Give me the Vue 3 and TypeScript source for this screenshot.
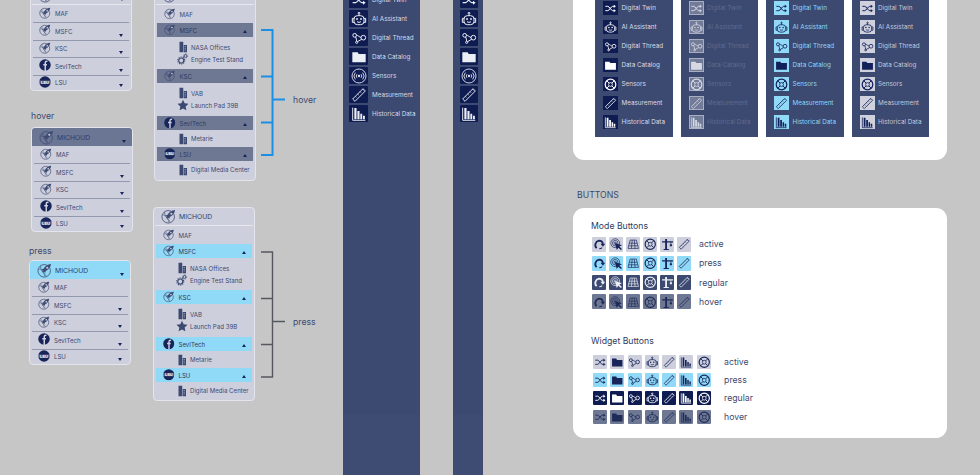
<template>
  <div class="board">
    <!-- shared icon set -->
    <svg class="sprite" aria-hidden="true">
      <defs>
        <symbol id="i-shuffle" viewBox="0 0 24 24">
          <path d="M2.500 8h4.500c3 0 6 8 9 8h3M2.500 16h4.500c3 0 6-8 9-8h3" fill="none" stroke="currentColor" stroke-width="1.800" />
          <path d="M18 5l4 3-4 3zM18 13l4 3-4 3z" fill="currentColor" />
        </symbol>
        <symbol id="i-robot" viewBox="0 0 24 24">
          <g fill="none" stroke="currentColor" stroke-width="1.500">
            <rect x="4.500" y="7" width="15" height="13.500" rx="5" />
            <path d="M12 7V4.800M4.500 11H2v6h2.500M19.500 11H22v6h-2.500M9 16c2 1.300 4 1.300 6 0" />
            <circle cx="12" cy="3.300" r="1.300" />
          </g>
          <circle cx="9" cy="12" r="1.400" fill="currentColor" />
          <circle cx="15" cy="12" r="1.400" fill="currentColor" />
        </symbol>
        <symbol id="i-thread" viewBox="0 0 24 24">
          <g fill="none" stroke="currentColor" stroke-width="1.500">
            <circle cx="5.500" cy="8" r="2.800" />
            <circle cx="18.500" cy="11.500" r="3.500" />
            <circle cx="8.500" cy="18.500" r="1.600" />
            <path d="M8.300 8c2.500 0 4.500 2.700 6.700 3.300M9.800 17.500l6-3.500M7 10.500c.8 2.200 1.500 4 1.500 6.400" />
          </g>
        </symbol>
        <symbol id="i-folder" viewBox="0 0 24 24">
          <path d="M2 5h8l1.500 2.500H22V20H2z" fill="currentColor" />
        </symbol>
        <symbol id="i-sensors" viewBox="0 0 24 24">
          <g fill="none" stroke="currentColor" stroke-width="1.300">
            <circle cx="12" cy="12" r="10.500" />
            <path d="M6.500 7a7.500 7.500 0 0 0 0 10M17.500 7a7.500 7.500 0 0 1 0 10M9 9.300a4 4 0 0 0 0 5.400M15 9.300a4 4 0 0 1 0 5.400" />
          </g>
          <circle cx="12" cy="12" r="1.700" fill="currentColor" />
        </symbol>
        <symbol id="i-life" viewBox="0 0 24 24">
          <g fill="none" stroke="currentColor">
            <circle cx="12" cy="12" r="9.800" stroke-width="2.200" />
            <circle cx="12" cy="12" r="3.600" stroke-width="1.400" />
            <path d="M5.500 5.500l4 4M18.500 5.500l-4 4M5.500 18.500l4-4M18.500 18.500l-4-4" stroke-width="1.800" />
          </g>
        </symbol>
        <symbol id="i-ruler" viewBox="0 0 24 24">
          <g fill="none" stroke="currentColor" stroke-width="1.400">
            <path d="M2.500 18L18 2.500l3.500 3.500L6 21.500z" />
            <path d="M6.500 14l1.700 1.700M10 10.500l1.700 1.700M13.500 7l1.700 1.700M17 3.500l1.700 1.700" stroke-width="1" />
          </g>
        </symbol>
        <symbol id="i-bars" viewBox="0 0 24 24">
          <path d="M2.500 2.500v19h19" fill="none" stroke="currentColor" stroke-width="1.400" />
          <path d="M5 3h3.300v17H5zM9.600 7.500h3.200V20H9.600zM14 11.500h2.800V20H14zM18 14.500h2.800V20H18z" fill="currentColor" />
        </symbol>
        <symbol id="i-rotate" viewBox="0 0 24 24">
          <path d="M7 19.500A8.500 8.500 0 0 1 11.500 5a7.500 7.500 0 0 1 7.500 6.500" fill="none" stroke="currentColor" stroke-width="3.400" />
          <path d="M14.500 11h9l-4.500 6z" fill="currentColor" />
          <path d="M12 20.500a8 8 0 0 0 5.500-2" fill="none" stroke="currentColor" stroke-width="2" />
        </symbol>
        <symbol id="i-target" viewBox="0 0 24 24">
          <g fill="none" stroke="currentColor" stroke-width="1.300">
            <circle cx="10" cy="10" r="8.500" />
            <circle cx="10" cy="10" r="5.300" />
            <circle cx="10" cy="10" r="2.200" />
          </g>
          <path d="M9.500 9.500L23 14l-5 2.500 5 4.500-2 2-5-4.500L13 23z" fill="currentColor" />
        </symbol>
        <symbol id="i-grid" viewBox="0 0 24 24">
          <g fill="none" stroke="currentColor" stroke-width="1.300">
            <path d="M6 4h12l4 16H2z" />
            <path d="M4.500 10h15M3.200 15h17.600M10 4l-1.500 16M14 4l1.500 16" />
          </g>
        </symbol>
        <symbol id="i-crane" viewBox="0 0 24 24">
          <path d="M8 2h3.500v19H15v2H5v-2h3zM2 6h21v2.500H2z" fill="currentColor" />
          <path d="M19 8v4" stroke="currentColor" stroke-width="1.400" />
          <path d="M17 12h4v4h-4z" fill="currentColor" />
        </symbol>
        <symbol id="i-site" viewBox="0 0 24 24">
          <g fill="none" stroke="#3f4c74">
            <circle cx="11.500" cy="12.500" r="10" stroke-width="1.300" />
            <path d="M2.500 10c5-2 9 5 10 11M6 4.500c-1 5 3 11 9 16" stroke-width="1" />
          </g>
          <path d="M22.500 1.500c-5.500.4-10 3.300-12 7.500l-3 1 2 1.800-1 3 2.800-1 1.800 2 1-3c4.600-2 7.800-6.600 8.400-11.300z" fill="#3f4c74" />
          <circle cx="16.500" cy="7.500" r="1.700" fill="#cdcfdc" />
        </symbol>
        <symbol id="i-fb" viewBox="0 0 24 24">
          <circle cx="12" cy="12" r="11.500" fill="currentColor" />
          <path d="M17 4.500h-1.500c-2 0-3 1.200-3 3.200V24M8.500 11.500H16" fill="none" stroke="#cdcfdc" stroke-width="3" />
        </symbol>
        <symbol id="i-lsu" viewBox="0 0 24 24">
          <circle cx="12" cy="12" r="11.500" fill="currentColor" />
          <path d="M0 9h24v6H0z" fill="#cdcfdc" opacity=".35" />
          <text x="12" y="15" text-anchor="middle" font-size="8" font-weight="700" font-family="Inter, sans-serif" fill="#fff">LSU</text>
        </symbol>
        <symbol id="i-building" viewBox="0 0 24 24">
          <path d="M5 1.500h7.500v21H5zM13.500 8H20v14.500h-6.500z" fill="currentColor" />
          <path d="M15 11h3M15 14.500h3M15 18h3" stroke="#cdcfdc" stroke-width="1" />
        </symbol>
        <symbol id="i-gears" viewBox="0 0 24 24">
          <g fill="none" stroke="currentColor">
            <circle cx="8.500" cy="15" r="5" stroke-width="2.400" />
            <circle cx="8.500" cy="15" r="7" stroke-width="2.200" stroke-dasharray="2.200 2.200" />
            <circle cx="17" cy="6" r="2.800" stroke-width="1.800" />
            <circle cx="17" cy="6" r="4.300" stroke-width="1.500" stroke-dasharray="1.700 1.700" />
          </g>
        </symbol>
        <symbol id="i-star" viewBox="0 0 24 24">
          <path d="M12 1.500l3.300 7.200 7.700.9-5.700 5.300 1.500 7.800L12 18.800l-6.800 3.900 1.500-7.800L1 9.600l7.700-.9z" fill="currentColor" />
        </symbol>
      </defs>
    </svg>

    <!-- tree menus -->
    <section v-for="menu in menus" :key="menu.id" class="menu" :class="[menu.id, menu.state, { open: menu.open }]">
      <header class="menu-head">
        <svg class="head-icon"><use href="#i-site" /></svg>
        <span>MICHOUD</span>
        <i v-if="!menu.open" class="caret" />
      </header>
      <template v-for="node in tree" :key="node.label">
        <div class="menu-row" :class="{ branch: node.kids.length }">
          <svg class="row-icon"><use :href="`#i-${node.icon}`" /></svg>
          <span>{{ node.label }}</span>
          <i v-if="node.kids.length" class="caret" :class="{ up: menu.open }" />
        </div>
        <div
          v-if="menu.open && node.kids.length"
          class="kids"
          :class="{ single: node.kids.length === 1, roomy: node.label === 'KSC' }"
        >
          <div v-for="kid in node.kids" :key="kid.label" class="kid">
            <svg class="kid-icon"><use :href="`#i-${kid.icon}`" /></svg>
            <span>{{ kid.label }}</span>
          </div>
        </div>
      </template>
    </section>

    <p class="note note-hover">hover</p>
    <p class="note note-press">press</p>

    <div v-for="b in brackets" :key="b.label" class="bracket" :class="b.label">
      <svg width="25" height="128" viewBox="0 0 25 128">
        <path d="M0 1h11.500v125H0M0 47.500h11.500M0 93.500h11.500M11.500 70.500H24" fill="none" stroke="currentColor" :stroke-width="b.weight" />
      </svg>
      <span class="note">{{ b.label }}</span>
    </div>

    <!-- full height nav rails -->
    <nav class="rail rail-wide">
      <div v-for="item in railItems" :key="item.label" class="rail-item">
        <span class="rail-tile"><svg><use :href="`#i-${item.icon}`" /></svg></span>
        <span>{{ item.label }}</span>
      </div>
    </nav>
    <nav class="rail rail-slim">
      <div v-for="item in railItems" :key="item.label" class="rail-item">
        <span class="rail-tile"><svg><use :href="`#i-${item.icon}`" /></svg></span>
      </div>
    </nav>

    <!-- nav states -->
    <div class="card card-nav">
      <div v-for="state in navStates" :key="state" class="nav-col" :class="state">
        <div v-for="item in navItems" :key="item.label" class="nav-item">
          <span class="nav-tile"><svg><use :href="`#i-${item.icon}`" /></svg></span>
          <span>{{ item.label }}</span>
        </div>
      </div>
    </div>

    <h2 class="buttons-title">BUTTONS</h2>

    <!-- button states -->
    <div class="card card-buttons">
      <section v-for="group in buttonGroups" :key="group.title" class="btn-group" :class="group.kind">
        <h3>{{ group.title }}</h3>
        <div v-for="state in buttonStates" :key="state" class="btn-row" :class="state">
          <span v-for="icon in group.icons" :key="icon" class="btn"><svg><use :href="`#i-${icon}`" /></svg></span>
          <span class="btn-label">{{ state }}</span>
        </div>
      </section>
    </div>
  </div>
</template>

<script setup lang="ts">
interface Kid {
  label: string
  icon: string
}

interface TreeNode {
  label: string
  icon: string
  kids: Kid[]
}

const tree: TreeNode[] = [
  { label: 'MAF', icon: 'site', kids: [] },
  {
    label: 'MSFC',
    icon: 'site',
    kids: [
      { label: 'NASA Offices', icon: 'building' },
      { label: 'Engine Test Stand', icon: 'gears' },
    ],
  },
  {
    label: 'KSC',
    icon: 'site',
    kids: [
      { label: 'VAB', icon: 'building' },
      { label: 'Launch Pad 39B', icon: 'star' },
    ],
  },
  { label: 'SevITech', icon: 'fb', kids: [{ label: 'Metarie', icon: 'building' }] },
  { label: 'LSU', icon: 'lsu', kids: [{ label: 'Digital Media Center', icon: 'building' }] },
]

const menus = [
  { id: 'm-base', state: 'regular', open: false },
  { id: 'm-hover', state: 'hover', open: false },
  { id: 'm-press', state: 'press', open: false },
  { id: 'm-open-hover', state: 'hover', open: true },
  { id: 'm-open-press', state: 'press', open: true },
]

const brackets = [
  { label: 'hover', weight: 2 },
  { label: 'press', weight: 1.4 },
]

const railItems = [
  { label: 'Digital Twin', icon: 'shuffle' },
  { label: 'AI Assistant', icon: 'robot' },
  { label: 'Digital Thread', icon: 'thread' },
  { label: 'Data Catalog', icon: 'folder' },
  { label: 'Sensors', icon: 'sensors' },
  { label: 'Measurement', icon: 'ruler' },
  { label: 'Historical Data', icon: 'bars' },
]

const navItems = railItems.map((item) => (item.icon === 'sensors' ? { ...item, icon: 'life' } : item))
const navStates = ['regular', 'disabled', 'press', 'active']

const buttonStates = ['active', 'press', 'regular', 'hover']
const buttonGroups = [
  { title: 'Mode Buttons', kind: 'mode', icons: ['rotate', 'target', 'grid', 'life', 'crane', 'ruler'] },
  { title: 'Widget Buttons', kind: 'widget', icons: ['shuffle', 'folder', 'thread', 'robot', 'ruler', 'bars', 'life'] },
]
</script>

<style>
html,
body {
  margin: 0;
  background: #c6c6c6;
}
</style>

<style scoped>
.board {
  position: relative;
  width: 980px;
  height: 475px;
  overflow: hidden;
  background: #c6c6c6;
  font-family: Inter, "Liberation Sans", sans-serif;
  color: #3c4a72;
}

.sprite {
  position: absolute;
  width: 0;
  height: 0;
}

svg {
  display: block;
}

/* tree menu */
.menu {
  position: absolute;
  box-sizing: border-box;
  width: 102px;
  border: 1px solid #e3e4ec;
  border-radius: 4px;
  background: #cdcfdc;
  font-size: 6.100px;
}

.m-base { left: 30px; top: -14px; }
.m-hover { left: 31px; top: 127px; }
.m-press { left: 29px; top: 260px; }
.m-open-hover { left: 154px; top: -14px; padding-bottom: 2px; }
.m-open-press { left: 153px; top: 207px; padding-bottom: 1px; }

.menu-head {
  display: flex;
  align-items: center;
  gap: 3px;
  box-sizing: border-box;
  height: 18px;
  padding: 0 6px 0 7px;
  border-radius: 3px 3px 0 0;
  font-size: 6.800px;
  color: #2f3c66;
}

.head-icon {
  width: 15px;
  height: 15px;
}

.m-hover .menu-head { background: #6b7594; }
.m-press .menu-head { background: #90d9f7; }

.m-base .menu-head,
.open .menu-head {
  border-bottom: 1px solid #e6e7ee;
  margin: 0 1px;
  padding-left: 6px;
}

.menu-row {
  display: flex;
  align-items: center;
  gap: 4px;
  box-sizing: border-box;
  height: 17.500px;
  margin: 0 2px;
  padding: 0 6px;
  border-top: 1px solid #9299ad;
}

.menu-row span {
  transform: translateY(-0.500px);
}

.row-icon {
  width: 12px;
  height: 12px;
  color: #17255a;
  transform: translateY(-1px);
}

.menu-head + .menu-row {
  border-top: 0;
  height: 17px;
}

.menu-row:last-child {
  height: 15.500px;
}

.caret {
  width: 0;
  height: 0;
  margin-left: auto;
  align-self: flex-end;
  margin-bottom: 3px;
  border-left: 2.500px solid transparent;
  border-right: 2.500px solid transparent;
  border-top: 3px solid #17255a;
}

.caret.up {
  margin-bottom: 4px;
  border-top: 0;
  border-bottom: 3px solid #17255a;
}

/* expanded */
.open .menu-row {
  height: 14px;
  border-top: 0;
  padding: 0 6px 0 7px;
}

.open .menu-head + .menu-row {
  height: 18px;
}

.open .row-icon {
  width: 11.500px;
  height: 11.500px;
  transform: none;
}

.m-open-hover .branch { background: #6e7893; color: #2f3b62; }
.m-open-press .branch { background: #90d9f7; color: #2f3b62; }

.kids {
  padding: 4px 0;
}

.kids.roomy {
  padding-bottom: 5px;
}

.kids.single {
  padding: 2px 0;
}

.kid {
  display: flex;
  align-items: center;
  gap: 2px;
  height: 12px;
  padding-left: 22px;
}

.kids.single .kid {
  height: 13px;
}

.kid-icon {
  width: 12px;
  height: 12px;
  color: #3c4a72;
}

/* annotations */
.note {
  position: absolute;
  margin: 0;
  font-size: 8.700px;
  line-height: 12px;
  color: #3c4a72;
}

.note-hover { left: 31px; top: 110px; }
.note-press { left: 29px; top: 245px; }

.bracket {
  position: absolute;
  left: 261px;
  display: flex;
  align-items: center;
  gap: 7px;
}

.bracket .note {
  position: static;
  margin-top: 13px;
}

.bracket.hover { top: 29px; color: #1a8fe8; }
.bracket.press { top: 251px; color: #55585f; }

/* rails */
.rail {
  position: absolute;
  top: 0;
  height: 475px;
  background: linear-gradient(#3c4a72 415px, #3e4c74 415px);
  font-size: 6.300px;
  color: #d6d9e6;
}

.rail-wide { left: 343px; width: 77px; }
.rail-slim { left: 453px; width: 30px; }

.rail-item {
  display: flex;
  align-items: center;
  gap: 4px;
  height: 19px;
  padding-left: 6px;
  position: relative;
  top: -10px;
}

.rail-slim .rail-item {
  padding-left: 7px;
}

.rail-tile {
  box-sizing: border-box;
  display: flex;
  align-items: center;
  justify-content: center;
  flex: none;
  width: 19px;
  height: 17px;
  background: #0e1c52;
  border-radius: 1px;
  color: #eceef5;
}

.rail-slim .rail-tile {
  width: 18px;
}

.rail-tile svg {
  width: 16px;
  height: 16px;
}

/* white cards */
.card {
  position: absolute;
  left: 573px;
  box-sizing: border-box;
  width: 374px;
  background: #fff;
  border-radius: 11px;
}

.card-nav {
  top: -20px;
  height: 180px;
  display: flex;
  gap: 8px;
  padding: 0 0 23px 22px;
}

.nav-col {
  width: 77.500px;
  box-sizing: border-box;
  padding: 18.500px 0 0 8px;
  background: #3c4a72;
  font-size: 6.300px;
}

.nav-item {
  display: flex;
  align-items: center;
  gap: 3.500px;
  height: 19px;
}

.nav-tile {
  box-sizing: border-box;
  display: flex;
  align-items: center;
  justify-content: center;
  flex: none;
  width: 15px;
  height: 14.500px;
}

.nav-tile svg {
  width: 13px;
  height: 13px;
}

.nav-col.regular { color: #d8dbe8; }
.nav-col.regular .nav-tile { background: #0e1c52; color: #fff; }
.nav-col.disabled { color: #5d6a8e; }
.nav-col.disabled .nav-tile { background: #727c98; border: 1px solid #a8aec0; color: #d6d9e4; }
.nav-col.press { color: #8fd6f5; }
.nav-col.press .nav-tile { background: #90d9f7; color: #12205a; }
.nav-col.active { color: #c3c8da; }
.nav-col.active .nav-tile { background: #cfd1dd; color: #12205a; }

.buttons-title {
  position: absolute;
  left: 577px;
  top: 189px;
  margin: 0;
  font-size: 8.700px;
  line-height: 12px;
  font-weight: 400;
  color: #3c4a6e;
}

.card-buttons {
  top: 208px;
  height: 230px;
  padding: 12px 0 0 18px;
}

.btn-group h3 {
  margin: 0 0 4.500px;
  font-size: 8.700px;
  line-height: 12px;
  font-weight: 400;
  color: #2f3c62;
}

.btn-group.widget {
  margin-top: 26px;
}

.btn-row {
  display: flex;
  align-items: center;
  gap: 3px;
  height: 15px;
  margin-bottom: 4.300px;
  padding-left: 1px;
}

.widget h3 {
  margin-bottom: 7.500px;
}

.widget .btn-row {
  gap: 3.300px;
  height: 14px;
  padding-left: 2px;
}

.btn {
  display: flex;
  align-items: center;
  justify-content: center;
  flex: none;
  width: 14px;
  height: 100%;
  border-radius: 1px;
}

.btn svg {
  width: 12.500px;
  height: 12.500px;
}

.btn-label {
  margin-left: 5px;
  font-size: 8.700px;
  color: #3c4a72;
}

.widget .btn-label {
  margin-left: 10px;
}

.btn-row.active .btn { background: #cdcfdc; color: #17255a; }
.btn-row.press .btn { background: #90d9f7; color: #17255a; }
.btn-row.regular .btn { background: #3c4a72; color: #eceef5; }
.widget .btn-row.regular .btn { background: #0e1c52; color: #fff; }
.btn-row.hover .btn { background: #6e7893; color: #1f2c58; }
</style>
